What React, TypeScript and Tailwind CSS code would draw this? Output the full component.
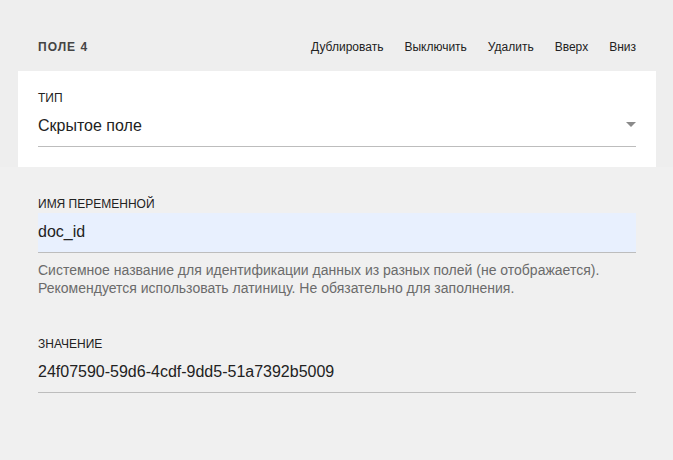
const actions = ["Дублировать", "Выключить", "Удалить", "Вверх", "Вниз"];

const Label = ({ children }: { children: React.ReactNode }) => (
  <div className="text-[12px] leading-4 uppercase text-[#222]">{children}</div>
);

export default function App() {
  return (
    <div className="min-h-[460px] w-[673px] bg-[#f0f0f0] font-['Liberation_Sans',Arial,sans-serif]">
      {/* шапка поля */}
      <div className="bg-[#eeeeee] pt-[39px]">
        <div className="flex items-center justify-between pl-[38px] pr-[37px] h-4">
          <span className="text-[12px] leading-4 font-bold tracking-[1px] text-[#444]">
            ПОЛЕ 4
          </span>
          <div className="flex gap-[21px] text-[12px] leading-4 text-[#222]">
            {actions.map((a) => (
              <span key={a} className="cursor-pointer">
                {a}
              </span>
            ))}
          </div>
        </div>

        <div className="pt-4 pl-[18px] pr-[17px]">
          <div className="bg-white px-5 pt-[19px] pb-5">
            <Label>Тип</Label>
            <div className="mt-2 flex items-center justify-between border-b border-[#bdbdbd] pb-2">
              <span className="text-[16px] leading-6 text-[#222]">Скрытое поле</span>
              <svg width="10" height="5" viewBox="0 0 10 5" className="-mt-[3px]">
                <path d="M0 0h10L5 5z" fill="#8a8a8a" />
              </svg>
            </div>
          </div>
        </div>
      </div>

      <div className="px-[38px] pt-[29px] pr-[37px]">
        <Label>Имя переменной</Label>
        <div className="mt-px h-10 bg-[#e8f0fe] border-b border-[#bdbdbd] pt-[7px]">
          <span className="text-[16px] leading-6 text-[#222]">doc_id</span>
        </div>
        <p className="mt-2 text-[14px] leading-[18px] text-[#6b6b6b]">
          Системное название для идентификации данных из разных полей (не отображается).
          <br />
          Рекомендуется использовать латиницу. Не обязательно для заполнения.
        </p>

        <div className="mt-[39px]">
          <Label>Значение</Label>
          <div className="mt-2 border-b border-[#bdbdbd] pb-2">
            <span className="text-[16px] leading-6 text-[#222]">
              24f07590-59d6-4cdf-9dd5-51a7392b5009
            </span>
          </div>
        </div>
      </div>
    </div>
  );
}
